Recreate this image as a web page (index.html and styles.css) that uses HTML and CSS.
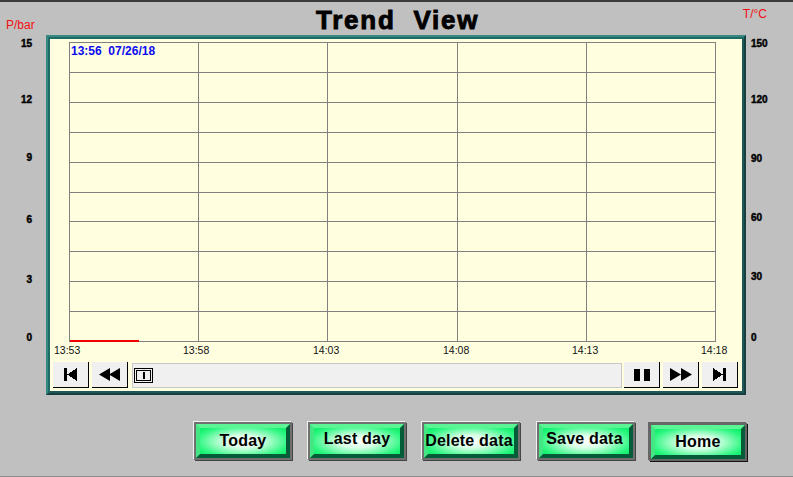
FILE: index.html
```html
<!DOCTYPE html>
<html lang="en">
<head>
<meta charset="utf-8">
<title>Trend View</title>
<link rel="stylesheet" href="styles.css">
</head>
<body>
<div class="screen">
  <header class="header">
    <span class="unit unit-left">P/bar</span>
    <h1 class="title">Trend&nbsp; View</h1>
    <span class="unit unit-right">T/°C</span>
  </header>
  <main class="main">
    <div class="axis axis-left">
      <span>15</span><span>12</span><span>9</span><span>6</span><span>3</span><span>0</span>
    </div>
    <section class="panel">
      <div class="chart">
        <svg class="plot" width="692" height="304" viewBox="0 0 692 304" shape-rendering="crispEdges">
          <path class="gridline" d="M19.5 3V303M148.5 3V303M277.5 3V303M407.5 3V303M536.5 3V303M665.5 3V303M19 3.5H666M19 33.5H666M19 63.5H666M19 93.5H666M19 123.5H666M19 153.5H666M19 182.5H666M19 212.5H666M19 242.5H666M19 272.5H666M19 302.5H666"/>
          <rect class="series" x="20" y="301" width="69" height="2"/>
        </svg>
        <span class="stamp">13:56&nbsp; 07/26/18</span>
      </div>
      <div class="times">
        <span>13:53</span><span>13:58</span><span>14:03</span><span>14:08</span><span>14:13</span><span>14:18</span>
      </div>
      <div class="nav">
        <button class="nav-btn" aria-label="First"><svg width="14" height="13" viewBox="0 0 14 13" shape-rendering="crispEdges"><path d="M0 0h3v13H0zM3 6.5 13 0v13z"/></svg></button>
        <button class="nav-btn" aria-label="Back"><svg width="22" height="13" viewBox="0 0 22 13"><path d="M0 6.5 11 0v13zM10 6.5 21 0v13z"/></svg></button>
        <div class="scroll">
          <div class="thumb"><i class="thumb-inner"><b class="thumb-bar"></b></i></div>
        </div>
        <button class="nav-btn nav-first-right" aria-label="Pause"><svg width="16" height="12" viewBox="0 0 16 12"><path d="M0 0h6v12H0zM10 0h6v12h-6z"/></svg></button>
        <button class="nav-btn" aria-label="Forward"><svg width="22" height="13" viewBox="0 0 22 13"><path d="M0 0l11 6.5L0 13zM11 0l11 6.5L11 13z"/></svg></button>
        <button class="nav-btn" aria-label="Last"><svg width="14" height="13" viewBox="0 0 14 13" shape-rendering="crispEdges"><path d="M0 0l10 6.5L0 13zM10 0h3v13h-3z"/></svg></button>
      </div>
    </section>
    <div class="axis axis-right">
      <span>150</span><span>120</span><span>90</span><span>60</span><span>30</span><span>0</span>
    </div>
  </main>
  <div class="actions">
    <button class="action">Today</button>
    <button class="action action-raised">Last day</button>
    <button class="action action-delete">Delete data</button>
    <button class="action action-raised action-save">Save data</button>
    <button class="action action-home">Home</button>
  </div>
</div>
</body>
</html>
```
FILE: styles.css
```css
* { box-sizing: border-box; }
html, body { margin: 0; padding: 0; overflow: hidden; }
body { font-family: "Liberation Sans", Arial, sans-serif; background: #c0c0c0; }

.screen {
  width: 793px;
  height: 477px;
  background: #c0c0c0;
  border-top: 2px solid #3a3a3a;
  border-bottom: 1px solid #8c8c8c;
}

.header {
  height: 33px;
  display: grid;
  grid-template-columns: 316px 1fr auto;
}
.unit { color: #f01010; font-size: 12px; line-height: 13px; }
.unit-left { grid-column: 1; grid-row: 1; padding: 17px 0 0 6px; }
.unit-right { grid-column: 3; grid-row: 1; padding: 6px 26px 0 0; }
.title {
  margin: 0;
  grid-column: 2;
  grid-row: 1;
  font-size: 26px;
  line-height: 30px;
  font-weight: 700;
  letter-spacing: 1.75px;
  color: #000;
  -webkit-text-stroke: 0.9px #000;
  padding-top: 3px;
}

.main { display: flex; height: 360px; }

.axis {
  display: grid;
  font-size: 10px;
  line-height: 12px;
  font-weight: 700;
  color: #000;
  -webkit-text-stroke: 0.45px #000;
}
.axis-left {
  width: 46px;
  padding: 3px 14px 0 0;
  justify-items: end;
  grid-template-rows: 56px 58px 62px 60px 58px auto;
}
.axis-right {
  width: 47px;
  padding: 3px 0 0 5px;
  grid-template-rows: 56px 59px 59px 59px 61px auto;
}

.panel {
  width: 700px;
  height: 360px;
  padding: 2px;
  background: #ffffe0;
  border-style: solid;
  border-width: 2px;
  border-color: #35897f #163f40 #163f40 #35897f;
  box-shadow: inset 2px 2px 0 #1f6b68, inset -2px -2px 0 #1f5658;
}

.chart { position: relative; height: 304px; }
.plot { display: block; }
.gridline { stroke: #808080; stroke-width: 1; fill: none; }
.series { fill: #f00000; }
.stamp {
  position: absolute;
  left: 21px;
  top: 6px;
  color: #0b0bf0;
  font-size: 12px;
  line-height: 13px;
  font-weight: 700;
}

.times {
  height: 19px;
  padding: 1px 0 0 4px;
  display: grid;
  grid-template-columns: 129px 130px 130px 129px 129px auto;
  font-size: 10.5px;
  line-height: 13px;
  color: #111;
}

.nav { display: flex; height: 26px; padding-left: 3px; }
.nav-btn {
  width: 36px;
  height: 26px;
  margin-right: 3px;
  padding: 0;
  background: #f0f0f0;
  border: 0;
  border-right: 1px solid #000;
  border-bottom: 1px solid #000;
  display: flex;
  align-items: center;
  justify-content: center;
}
.nav-first-right { margin-left: 2px; }
.scroll {
  width: 490px;
  height: 25px;
  margin: 1px 0 0 1px;
  background: #f0f0f0;
  border: 1px solid #c8c8c8;
  padding: 4px 0 0 1px;
}
.thumb {
  width: 19px;
  height: 15px;
  border: 1px solid #000;
  padding: 1px;
}
.thumb-inner {
  display: flex;
  justify-content: center;
  align-items: center;
  height: 100%;
  border: 1px solid #000;
}
.thumb-bar { width: 2px; height: 7px; background: #000; }

.actions {
  display: flex;
  align-items: flex-start;
  margin-top: 29px;
  padding-left: 196px;
}
.action {
  width: 94px;
  height: 34px;
  margin: 0 20px 0 0;
  padding: 0;
  font: 700 16px/1 "Liberation Sans", Arial, sans-serif;
  letter-spacing: 0.2px;
  color: #000;
  background: radial-gradient(ellipse 62% 72% at 50% 52%, #ffffff 0%, #d8ffe6 35%, #2ef782 85%, #12f06c 100%);
  background-clip: padding-box;
  border: 4px solid;
  border-color: #5bf596 #055c39 #055c39 #44e583;
  box-shadow: 0 0 0 2px #707070, -1px -1px 0 2px #f2f2f2, 1px 1px 0 2px #444;
  white-space: nowrap;
  display: flex;
  align-items: center;
  justify-content: center;
}
.action-raised { padding-bottom: 4px; }
.action-delete { margin-right: 21px; padding-right: 4px; }
.action-save { margin-right: 19px; padding-right: 3px; }
.action-home {
  margin: 1px 0 0 -1px;
  box-shadow: 0 0 0 2px #666, -1px -1px 0 2px #666, 1px 1px 0 2px #111;
}
```
